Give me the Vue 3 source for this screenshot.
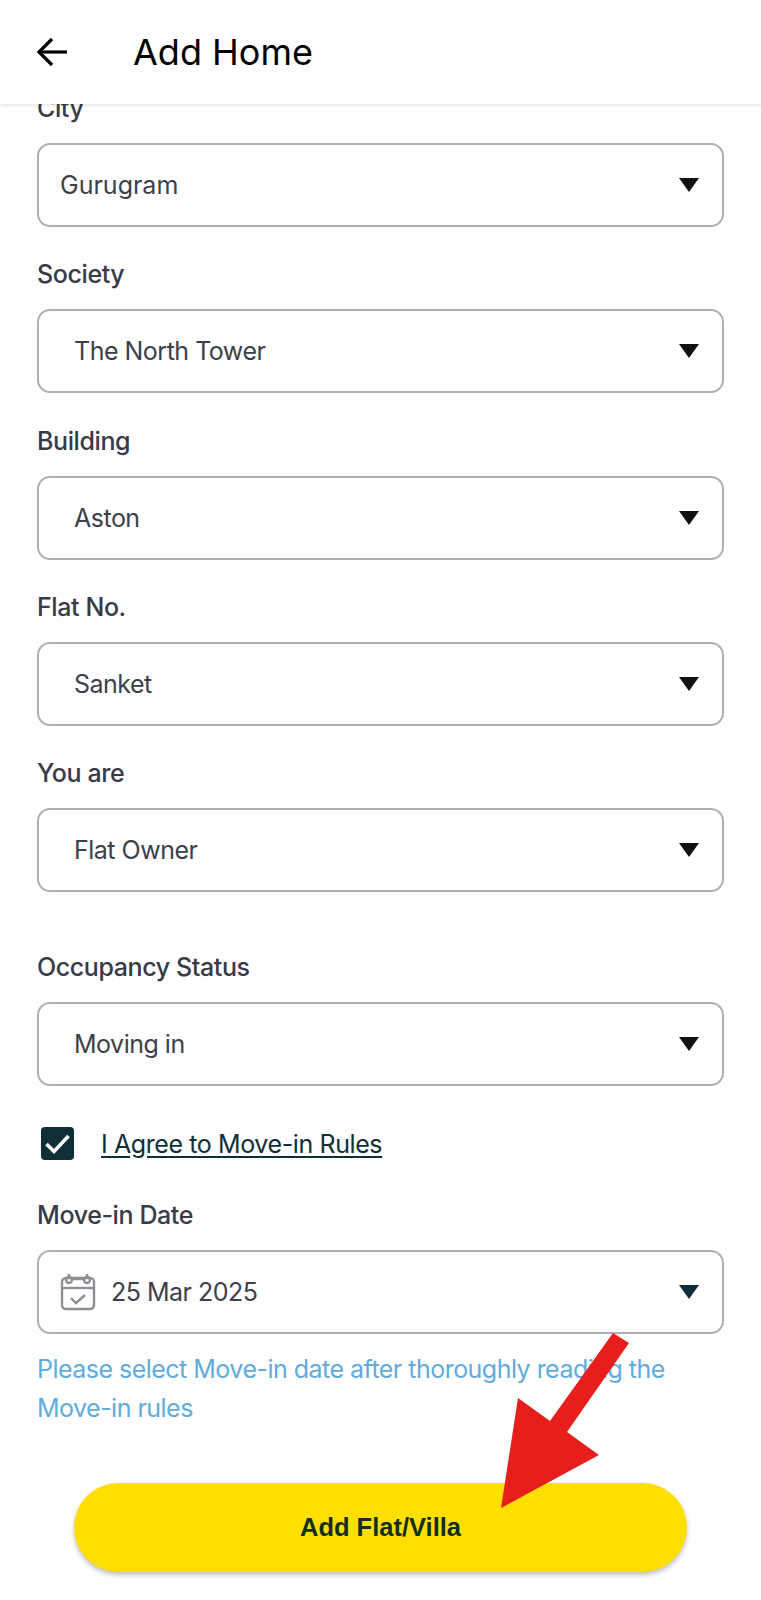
<script setup>
const selects = [
  { label: 'City', value: 'Gurugram', flush: true },
  { label: 'Society', value: 'The North Tower' },
  { label: 'Building', value: 'Aston' },
  { label: 'Flat No.', value: 'Sanket' },
  { label: 'You are', value: 'Flat Owner' }
]
</script>

<template>
  <div class="screen">
    <header class="topbar">
      <button class="back" aria-label="Back">
        <svg width="32" height="30" viewBox="0 0 32 30" fill="none" stroke="#000" stroke-width="3.2">
          <path d="M31 15H3" />
          <path d="M16 2L3 15l13 13" />
        </svg>
      </button>
      <h1 class="title">Add Home</h1>
    </header>

    <main class="form">
      <div class="field" v-for="item in selects" :key="item.label">
        <label class="label">{{ item.label }}</label>
        <div class="select" :class="{ flush: item.flush }">
          <span class="value">{{ item.value }}</span>
          <span class="caret"></span>
        </div>
      </div>

      <div class="field occupancy">
        <label class="label">Occupancy Status</label>
        <div class="select">
          <span class="value">Moving in</span>
          <span class="caret"></span>
        </div>
      </div>

      <div class="agree">
        <span class="checkbox">
          <svg width="27" height="22" viewBox="0 0 27 22" fill="none" stroke="#fff" stroke-width="3.6">
            <path d="M2.5 11l7.5 7.5L24.5 3" />
          </svg>
        </span>
        <a class="rules">I Agree to Move-in Rules</a>
      </div>

      <div class="field date">
        <label class="label">Move-in Date</label>
        <div class="select date-select">
          <svg class="calendar" width="36" height="38" viewBox="0 0 36 38" fill="none" stroke="#8e9095" stroke-width="2.4">
            <rect x="2" y="5" width="32" height="31" rx="4" />
            <path d="M2 15h32" />
            <path d="M13 6h10" />
            <circle cx="9" cy="7" r="3" />
            <circle cx="27" cy="7" r="3" />
            <path d="M9 1v5M27 1v5" />
            <path d="M11 25l5 5 9-8" />
          </svg>
          <span class="value">25 Mar 2025</span>
          <span class="caret teal"></span>
        </div>
      </div>

      <p class="hint">Please select Move-in date after thoroughly reading the Move-in rules</p>

      <button class="submit">Add Flat/Villa</button>
    </main>

    <svg class="red-arrow" width="761" height="1600" viewBox="0 0 761 1600">
      <polygon points="613,1333 629,1343 567,1432 599,1455 501,1508 518,1398 550,1421" fill="#e71f1c" />
    </svg>
  </div>
</template>

<style>
html, body {
  margin: 0;
  background: #fff;
}
</style>

<style scoped>
.screen {
  position: relative;
  width: 761px;
  height: 1600px;
  overflow: hidden;
  background: #fff;
  font-family: 'Inter', 'Liberation Sans', sans-serif;
}

.topbar {
  position: absolute;
  top: 0;
  left: 0;
  right: 0;
  z-index: 2;
  height: 104px;
  display: flex;
  align-items: center;
  background: #fff;
  box-shadow: 0 1px 4px rgba(0, 0, 0, 0.14);
}

.back {
  display: flex;
  margin-left: 36px;
  padding: 0;
  border: 0;
  background: none;
}

.title {
  margin: 0 0 0 65px;
  font-size: 36px;
  font-weight: 400;
  color: #000;
}

.form {
  display: flex;
  flex-direction: column;
  padding: 91px 37px 0 37px;
}

.field {
  display: flex;
  flex-direction: column;
  margin-bottom: 30.3px;
}

.label {
  height: 35px;
  font-size: 25px;
  line-height: 35px;
  font-weight: 500;
  letter-spacing: -0.4px;
  color: #383a47;
  margin-bottom: 17px;
}

.select {
  box-sizing: border-box;
  height: 84px;
  display: flex;
  align-items: center;
  padding: 0 23px 0 35px;
  border: 2px solid #b0b0b0;
  border-radius: 13px;
  background: #fff;
}

.select.flush {
  padding-left: 21px;
}

.value {
  flex: 1;
  font-size: 25px;
  letter-spacing: -0.5px;
  color: #3d3f4b;
}

.flush .value {
  letter-spacing: 0;
}

.caret {
  width: 0;
  height: 0;
  border-left: 10.5px solid transparent;
  border-right: 10.5px solid transparent;
  border-top: 14px solid #111;
}

.caret.teal {
  border-top-color: #0f2e38;
}

.occupancy {
  margin-top: 27.7px;
}

.agree {
  display: flex;
  align-items: center;
  gap: 27px;
  margin: 10.7px 0 0 4px;
}

.checkbox {
  width: 33px;
  height: 33px;
  display: flex;
  align-items: center;
  justify-content: center;
  border-radius: 4px;
  background: #0f2e38;
}

.rules {
  font-size: 25px;
  letter-spacing: -0.4px;
  color: #0f2e38;
  text-decoration: underline;
  text-underline-offset: 3px;
}

.date {
  margin: 38px 0 0;
}

.date-select {
  padding-left: 21px;
}

.calendar {
  margin-right: 15px;
}

.hint {
  margin: 16px 0 0;
  font-size: 25px;
  line-height: 39px;
  letter-spacing: -0.52px;
  color: #62abdc;
}

.submit {
  width: 613px;
  height: 89px;
  margin: 55px 0 0 37px;
  border: 0;
  border-radius: 45px;
  background: #ffdf00;
  box-shadow: 0 3px 5px rgba(0, 0, 0, 0.25);
  font-family: 'Liberation Sans', sans-serif;
  font-size: 25.5px;
  font-weight: 700;
  color: #12301f;
}

.red-arrow {
  position: absolute;
  top: 0;
  left: 0;
  z-index: 3;
  pointer-events: none;
}
</style>
